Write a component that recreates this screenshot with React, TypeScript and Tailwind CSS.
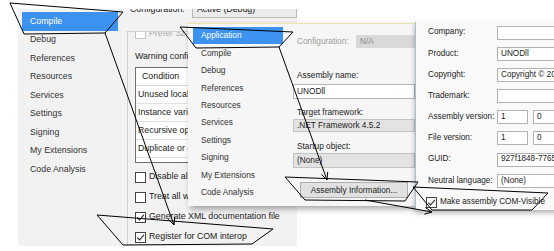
import React from "react";

const SIDEBAR_BACK = ["Compile", "Debug", "References", "Resources", "Services", "Settings", "Signing", "My Extensions", "Code Analysis"];
const SIDEBAR_MID = ["Application", "Compile", "Debug", "References", "Resources", "Services", "Settings", "Signing", "My Extensions", "Code Analysis"];

const WARNINGS = [
  "Unused local variable",
  "Instance variable accessed via a shared member",
  "Recursive operator or property access",
  "Duplicate or overlapping catch blocks",
];

function Check({ checked = false, disabled = false }: { checked?: boolean; disabled?: boolean }) {
  return (
    <span
      className={`w-[11px] h-[11px] shrink-0 border bg-white flex items-center justify-center ${
        disabled ? "border-[#c4c4c4]" : "border-[#444]"
      }`}
    >
      {checked && (
        <svg width="9" height="9" viewBox="0 0 9 9">
          <path d="M1.2 4.6 L3.5 7 L7.9 1.8" fill="none" stroke="#222" strokeWidth="1.1" />
        </svg>
      )}
    </span>
  );
}

function Field({ value, className = "" }: { value?: string; className?: string }) {
  return (
    <div className={`h-[14px] bg-white border border-[#b3b3b3] flex items-center pl-[3px] whitespace-nowrap overflow-hidden ${className}`}>
      {value}
    </div>
  );
}

export default function App() {
  return (
    <div className="relative w-[554px] h-[251px] overflow-hidden bg-white font-['Liberation_Sans',Arial,sans-serif] text-[#222]">
      {/* back window – Compile page */}
      <div className="absolute left-[18px] top-[9px] w-[279px] h-[237px] overflow-hidden bg-[#f2f2f2] flex text-[8.8px]">
        <div className="w-[109px] shrink-0 pt-[3px] pl-[4px]">
          {SIDEBAR_BACK.map((item, i) => (
            <div
              key={item}
              className={`h-[18.5px] w-[96px] flex items-center pl-[8px] ${i === 0 ? "bg-[#3c92ee] text-white" : "text-[#333]"}`}
            >
              {item}
            </div>
          ))}
        </div>

        <div className="flex-1 flex flex-col min-w-0">
          <div className="mt-[-7px] h-[16px] flex items-center shrink-0">
            <span className="w-[65px] pl-[3px]">Configuration:</span>
            <div className="flex-1 h-full border border-[#b9b9b9] bg-[#ebebeb] flex items-center pl-[4px]">Active (Debug)</div>
          </div>

          <div className="mt-[13px] flex-1 border-t border-l border-[#cfcfcf] pl-[7px] flex flex-col overflow-hidden">
            <div className="mt-[-4px] h-[11px] flex items-center gap-[3px] text-[#a8a8a8] shrink-0">
              <Check disabled />
              Prefer 32-bit
            </div>
            <div className="mt-[12px] h-[12px] flex items-center shrink-0 whitespace-nowrap">Warning configurations:</div>

            <div className="mt-[4px] w-[170px] h-[96px] shrink-0 border border-[#6f6f6f] bg-white">
              <div className="h-[18px] flex items-center pl-[6px] border-b border-[#d6d6d6]">Condition</div>
              {WARNINGS.map((w) => (
                <div key={w} className="h-[18px] flex items-center pl-[2px] border-b border-[#e2e2e2] whitespace-nowrap overflow-hidden">
                  {w}
                </div>
              ))}
            </div>

            {[
              { label: "Disable all warnings", checked: false },
              { label: "Treat all warnings as errors", checked: false },
              { label: "Generate XML documentation file", checked: true },
              { label: "Register for COM interop", checked: true },
            ].map((c, i) => (
              <div key={c.label} className={`${i === 0 ? "mt-[7px]" : "mt-[6px]"} h-[14px] flex items-center gap-[3px] shrink-0 whitespace-nowrap`}>
                <Check checked={c.checked} />
                {c.label}
              </div>
            ))}
          </div>
        </div>
      </div>

      {/* middle window – Application page */}
      <div className="absolute left-[188px] top-[23px] w-[227px] h-[183px] bg-[#f6f6f6] border-t border-[#efe3ae] shadow-[2px_3px_6px_rgba(0,0,0,0.35)] flex text-[8.3px]">
        <div className="w-[105px] shrink-0 pt-[3px] pl-[5px]">
          {SIDEBAR_MID.map((item, i) => (
            <div
              key={item + i}
              className={`h-[17.4px] w-[90px] flex items-center pl-[8px] ${i === 0 ? "bg-[#3c92ee] text-white" : "text-[#333]"}`}
            >
              {item}
            </div>
          ))}
        </div>

        <div className="flex-1 flex flex-col min-w-0">
          <div className="mt-[11px] h-[13px] flex items-center">
            <span className="w-[63px] pl-[4px] text-[#9a9a9a]">Configuration:</span>
            <div className="flex-1 h-full bg-[#d9d9d9] flex items-center pl-[4px] text-[#8c8c8c]">N/A</div>
          </div>
          <div className="mt-[21px] h-[12px] flex items-center pl-[4px]">Assembly name:</div>
          <div className="mt-[3px] h-[15px] bg-white border border-[#b5b5b5] flex items-center pl-[3px]">UNODll</div>
          <div className="mt-[7px] h-[12px] flex items-center pl-[4px]">Target framework:</div>
          <div className="mt-[1px] h-[13px] bg-[#e3e3e3] border border-[#c2c2c2] flex items-center pl-[3px]">.NET Framework 4.5.2</div>
          <div className="mt-[8px] h-[12px] flex items-center pl-[4px]">Startup object:</div>
          <div className="mt-[1px] h-[15px] bg-[#e3e3e3] border border-[#c2c2c2] flex items-center pl-[3px]">(None)</div>
          <div className="mt-[14px] ml-[7px] w-[108px] h-[16px] bg-[#e1e1e1] border border-[#adadad] flex items-center justify-center">
            Assembly Information...
          </div>
        </div>
      </div>

      {/* front window – Assembly Information */}
      <div className="absolute left-[415px] top-[22px] w-[150px] h-[188px] bg-[#f9f9f9] border-l border-[#a6bfd9] shadow-[0_3px_5px_rgba(0,0,0,0.3)] flex flex-col pt-[3px] gap-[6.2px] text-[8.2px]">
        {[
          { label: "Company:", value: "" },
          { label: "Product:", value: "UNODll" },
          { label: "Copyright:", value: "Copyright © 2017" },
          { label: "Trademark:", value: "" },
        ].map((r) => (
          <div key={r.label} className="h-[15px] flex items-center">
            <span className="w-[81px] pl-[12px] shrink-0">{r.label}</span>
            <Field value={r.value} className="flex-1" />
          </div>
        ))}
        {["Assembly version:", "File version:"].map((label) => (
          <div key={label} className="h-[15px] flex items-center">
            <span className="w-[81px] pl-[12px] shrink-0 whitespace-nowrap">{label}</span>
            <Field value="1" className="w-[31px] shrink-0" />
            <Field value="0" className="ml-[5px] flex-1" />
          </div>
        ))}
        <div className="h-[15px] flex items-center">
          <span className="w-[81px] pl-[12px] shrink-0">GUID:</span>
          <Field value="927f1848-7765-4c3b-9d6e-2f1a3b4c5d6e" className="flex-1" />
        </div>
        <div className="h-[15px] flex items-center">
          <span className="w-[81px] pl-[12px] shrink-0 whitespace-nowrap">Neutral language:</span>
          <Field value="(None)" className="flex-1" />
        </div>
        <div className="h-[15px] flex items-center gap-[3px] pl-[10px] whitespace-nowrap">
          <Check checked />
          Make assembly COM-Visible
        </div>
      </div>

      {/* callout annotations */}
      <svg className="absolute inset-0 pointer-events-none" width="554" height="251" viewBox="0 0 554 251" fill="none" stroke="#000" strokeWidth="1">
        <polygon points="10,3 123,12 105,33 24,34" />
        <line x1="105" y1="33" x2="174" y2="225" />
        <polyline points="174.7,217 174,225 168.4,219.3" />
        <polygon points="97,215 273,229 252,244 123,245" />

        <polygon points="180,27 293,32 279,47 196,48" />
        <line x1="279" y1="47" x2="327" y2="180" />
        <polyline points="327.7,172 327,180 321.4,174.3" />
        <polygon points="285,177 418,182 405,201 305,200" />

        <line x1="365" y1="200" x2="432" y2="212" />
        <polyline points="425.4,207.5 432,212 424.3,214.2" />
        <polygon points="413,187 548,193 532,210 432,210" />
      </svg>
    </div>
  );
}
